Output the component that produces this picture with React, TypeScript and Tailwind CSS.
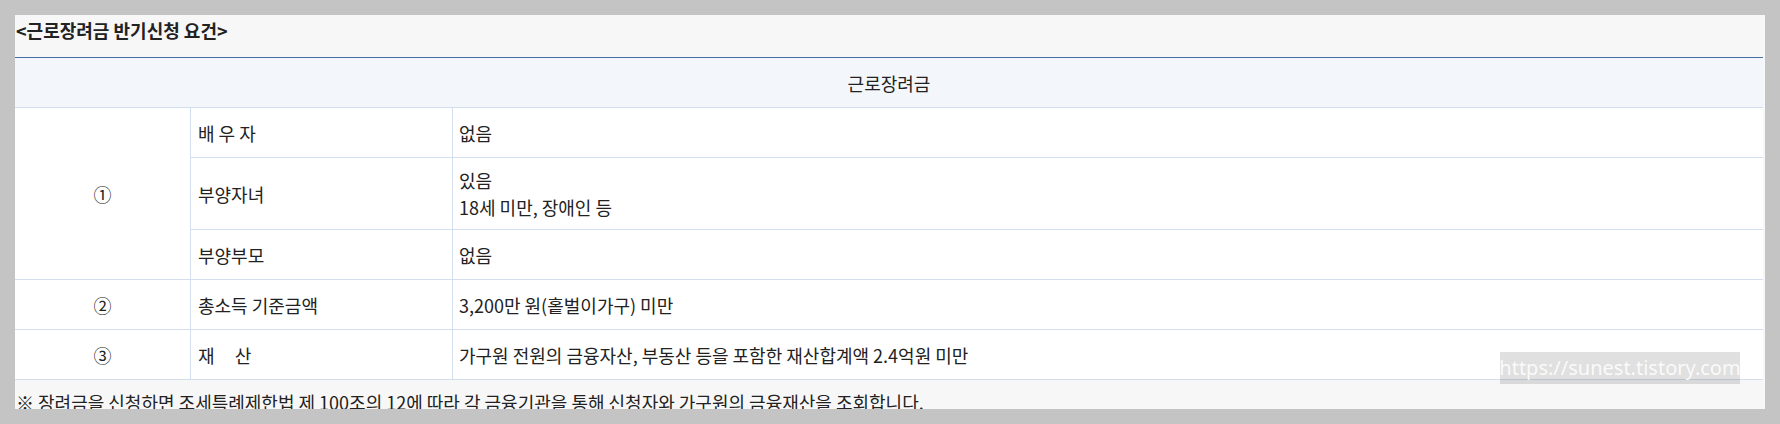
import React from "react";

const font = { fontFamily: '"Noto Sans CJK KR", "Noto Sans", sans-serif' };

export default function App() {
  const cellBase = "flex items-center text-[18px] leading-[24px] text-[#222]";
  return (
    <div className="w-[1780px] h-[424px] bg-[#c4c4c4] pt-[15px] px-[15px] overflow-hidden" style={font}>
      <div className="relative w-[1750px] h-[394px] bg-[#f7f7f7] overflow-hidden">
        <div className="h-[42px] pt-[3px] pl-[1px] text-[18px] leading-[24px] font-bold text-[#222]">
          &lt;근로장려금 반기신청 요건&gt;
        </div>
        <div className="w-[1748px] border-t border-[#4a6ea8]">
          <div className="h-[50px] bg-[#f3f6fa] border-b border-[#d3dfee] flex items-center justify-center text-[18px] leading-[24px] text-[#222]">
            근로장려금
          </div>
          <div className="grid grid-cols-[176px_262px_1fr] bg-white">
            <div className={`${cellBase} row-span-3 justify-center border-r border-b border-[#d3dfee]`}>①</div>
            <div className={`${cellBase} h-[50px] pl-[7px] border-r border-b border-[#d3dfee] whitespace-pre`}>배 우 자</div>
            <div className={`${cellBase} h-[50px] pl-[6px] border-b border-[#d3dfee]`}>없음</div>

            <div className={`${cellBase} h-[72px] pl-[7px] border-r border-b border-[#d3dfee]`}>부양자녀</div>
            <div className="h-[72px] pl-[6px] border-b border-[#d3dfee] flex flex-col justify-center text-[18px] leading-[27px] text-[#222]">
              <span>있음</span>
              <span>18세 미만, 장애인 등</span>
            </div>

            <div className={`${cellBase} h-[50px] pl-[7px] border-r border-b border-[#d3dfee]`}>부양부모</div>
            <div className={`${cellBase} h-[50px] pl-[6px] border-b border-[#d3dfee]`}>없음</div>

            <div className={`${cellBase} h-[50px] justify-center border-r border-b border-[#d3dfee]`}>②</div>
            <div className={`${cellBase} h-[50px] pl-[7px] border-r border-b border-[#d3dfee]`}>총소득 기준금액</div>
            <div className={`${cellBase} h-[50px] pl-[6px] border-b border-[#d3dfee]`}>3,200만 원(홑벌이가구) 미만</div>

            <div className={`${cellBase} h-[50px] justify-center border-r border-b border-[#d3dfee]`}>③</div>
            <div className={`${cellBase} h-[50px] pl-[7px] border-r border-b border-[#d3dfee] whitespace-pre`}>재     산</div>
            <div className={`${cellBase} h-[50px] pl-[6px] border-b border-[#d3dfee]`}>
              가구원 전원의 금융자산, 부동산 등을 포함한 재산합계액 2.4억원 미만
            </div>
          </div>
        </div>
        <div className="pt-[10px] pl-[1px] text-[18px] leading-[24px] text-[#222] whitespace-nowrap">
          ※ 장려금을 신청하면 조세특례제한법 제 100조의 12에 따라 각 금융기관을 통해 신청자와 가구원의 금융재산을 조회합니다.
        </div>
        <div
          className="absolute left-[1485px] top-[337px] w-[240px] h-[32px] bg-[rgba(0,0,0,0.12)] flex items-center justify-center text-[20px] leading-[32px] text-[rgba(255,255,255,0.85)] whitespace-nowrap"
          style={{ fontFamily: '"Noto Sans", sans-serif' }}
        >
          https://sunest.tistory.com
        </div>
      </div>
    </div>
  );
}
